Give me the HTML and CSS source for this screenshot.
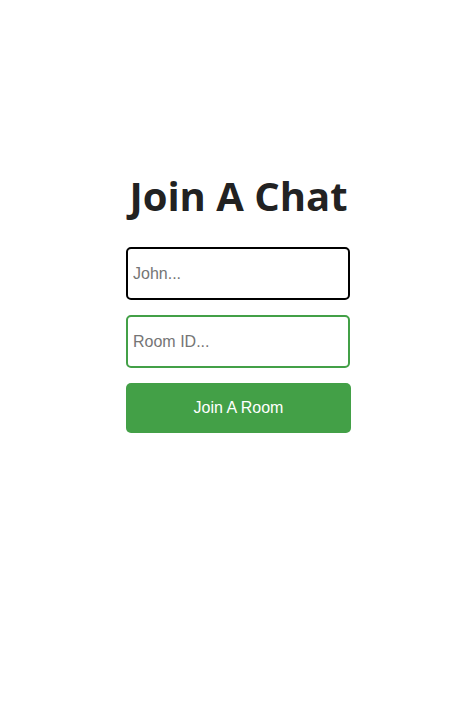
FILE: index.html
```html
<!DOCTYPE html>
<html lang="en">
<head>
<meta charset="utf-8">
<title>Join A Chat</title>
<link rel="stylesheet" href="styles.css">
</head>
<body>
<main class="join">
  <h1 class="join-title">Join A Chat</h1>
  <input class="join-input" type="text" placeholder="John..." autofocus>
  <input class="join-input" type="text" placeholder="Room ID...">
  <button class="join-button" type="button">Join A Room</button>
</main>
</body>
</html>
```

FILE: styles.css
```css
html, body {
  margin: 0;
  padding: 0;
  background: #fff;
}

body {
  padding: 172px 0 0 3px;
  font-family: "Liberation Sans", Arial, sans-serif;
}

.join {
  width: 225px;
  margin: 0 auto;
  display: flex;
  flex-direction: column;
  align-items: center;
}

.join-title {
  margin: 0 0 27px;
  font-family: "Open Sans", sans-serif;
  font-weight: 700;
  font-size: 40px;
  line-height: 48px;
  color: #222;
}

.join-input {
  box-sizing: border-box;
  width: 224px;
  height: 53px;
  margin: 0 0 15px;
  padding: 0 5px;
  align-self: flex-start;
  border: 2px solid #43a047;
  border-radius: 5px;
  font-family: "Liberation Sans", Arial, sans-serif;
  font-size: 16px;
  color: #222;
  background: #fff;
}

.join-input::placeholder {
  color: #757575;
}

.join-input:focus {
  outline: none;
  border-color: #000;
}

.join-button {
  box-sizing: border-box;
  width: 225px;
  height: 50px;
  border: none;
  border-radius: 5px;
  background: #43a047;
  color: #fff;
  font-family: "Liberation Sans", Arial, sans-serif;
  font-size: 16px;
  cursor: pointer;
}
```
